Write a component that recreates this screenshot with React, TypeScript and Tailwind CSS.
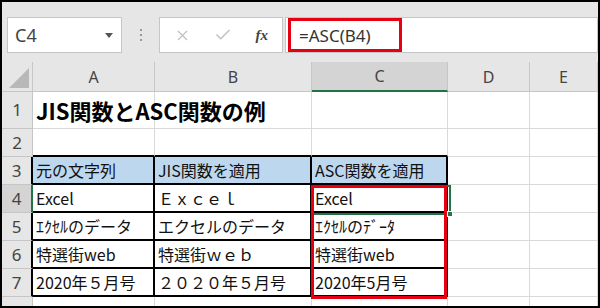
import React from 'react';
import { X, Check } from 'lucide-react';

type Row = {
  label: string;
  h: string;
  cells: string[];
};

const rows: Row[] = [
  { label: '1', h: 'h-[37px]', cells: ['', '', '', '', ''] },
  { label: '2', h: 'h-[28px]', cells: ['', '', '', '', ''] },
  { label: '3', h: 'h-[28px]', cells: ['元の文字列', 'JIS関数を適用', 'ASC関数を適用', '', ''] },
  { label: '4', h: 'h-[28px]', cells: ['Excel', 'Ｅｘｃｅｌ', 'Excel', '', ''] },
  { label: '5', h: 'h-[28px]', cells: ['ｴｸｾﾙのデータ', 'エクセルのデータ', 'ｴｸｾﾙのﾃﾞｰﾀ', '', ''] },
  { label: '6', h: 'h-[28px]', cells: ['特選街web', '特選街ｗｅｂ', '特選街web', '', ''] },
  { label: '7', h: 'h-[28px]', cells: ['2020年５月号', '２０２０年５月号', '2020年5月号', '', ''] },
];

const colLetters = ['A', 'B', 'C', 'D', 'E'];

const rowHeadClass = (label: string) => {
  if (label === '4') return 'bg-[#d4d4d4] border-r-2 border-r-[#217346] border-b border-b-[#c6c6c6]';
  if (label === '3' || label === '5' || label === '6' || label === '7')
    return 'bg-[#e6e6e6] border-r-2 border-r-black border-b border-b-[#c6c6c6]';
  return 'bg-[#e6e6e6] border-r border-r-[#c6c6c6] border-b border-b-[#c6c6c6]';
};

const cellClass = (label: string, col: number) => {
  const inTable = col < 3 && ['3', '4', '5', '6', '7'].includes(label);
  if (inTable) {
    const bg = label === '3' ? 'bg-[#bdd7ee]' : 'bg-white';
    return `${bg} border-r-2 border-b-2 border-black`;
  }
  if (label === '2' && col < 3) return 'bg-white border-r border-r-[#d9d9d9] border-b-2 border-b-black';
  return 'bg-white border-r border-b border-[#d9d9d9]';
};

export default function App() {
  return (
    <div className="w-[600px] h-[308px] border-2 border-black bg-[#e6e6e6] flex flex-col overflow-hidden" style={{ fontFamily: '"Noto Sans CJK JP", "Noto Sans", sans-serif' }}>
      <div className="h-[15px]" />
      {/* formula bar */}
      <div className="h-[36px] flex">
        <div className="ml-[5px] w-[115px] bg-white border border-[#c6c6c6] flex items-center justify-between pl-[7px] pr-[8px]">
          <span className="text-[18px] text-[#444] font-['Noto_Sans'] leading-none">C4</span>
          <span className="w-0 h-0 border-l-[4px] border-r-[4px] border-t-[5px] border-l-transparent border-r-transparent border-t-[#555]" />
        </div>
        <div className="w-[37px] flex flex-col items-center justify-center gap-[3px]">
          <span className="w-[2px] h-[2px] bg-[#999]" />
          <span className="w-[2px] h-[2px] bg-[#999]" />
          <span className="w-[2px] h-[2px] bg-[#999]" />
        </div>
        <div className="w-[124px] bg-white border border-[#c6c6c6] flex items-center justify-between pl-[14px] pr-[14px]">
          <X size={17} strokeWidth={1.5} color="#bdbdbd" />
          <Check size={18} strokeWidth={2.2} color="#c4c4c4" />
          <span className="text-[15px] italic font-bold text-[#444] font-['Liberation_Serif'] leading-none">fx</span>
        </div>
        <div className="ml-[2px] flex-1 bg-white border border-[#c6c6c6] flex pl-[2px]">
          <div className="w-[114px] border-[3px] border-[#e60012] flex items-center pl-[8px]">
            <span className="text-[17px] text-[#333] font-['Noto_Sans'] leading-none">=ASC(B4)</span>
          </div>
        </div>
      </div>
      <div className="h-[9px]" />
      {/* sheet */}
      <div className="relative flex-1">
        <div className="grid grid-cols-[31px_122px_157px_136px_82px_68px]">
          <div className="h-[30px] bg-[#e6e6e6] border-r border-b border-[#c6c6c6] flex items-end justify-end pr-[3px] pb-[3px]">
            <svg width="20" height="20" viewBox="0 0 20 20">
              <polygon points="20,0 20,20 0,20" fill="#b8b8b8" />
            </svg>
          </div>
          {colLetters.map((l, i) => (
            <div
              key={l}
              className={
                i === 2
                  ? 'h-[30px] bg-[#d4d4d4] border-r border-r-[#c6c6c6] border-b-2 border-b-[#217346] flex items-center justify-center text-[16px] text-[#444] font-["Noto_Sans"]'
                  : 'h-[30px] bg-[#e6e6e6] border-r border-b border-[#c6c6c6] flex items-center justify-center text-[16px] text-[#444] font-["Noto_Sans"]'
              }
            >
              {l}
            </div>
          ))}
          {rows.map((r) => (
            <React.Fragment key={r.label}>
              <div className={`${r.h} ${rowHeadClass(r.label)} flex items-center justify-center text-[17px] text-[#444] font-["Noto_Sans"]`}>
                {r.label}
              </div>
              {r.cells.map((c, i) => (
                <div key={i} className={`${r.h} ${cellClass(r.label, i)} flex items-center pl-[3px] text-[16px] text-[#111] whitespace-nowrap overflow-visible`}>
                  {r.label === '1' && i === 0 ? (
                    <span className="text-[22px] font-bold text-black relative z-10">JIS関数とASC関数の例</span>
                  ) : (
                    c
                  )}
                </div>
              ))}
            </React.Fragment>
          ))}
          <div className="h-[9px] bg-[#e6e6e6] border-r border-[#c6c6c6]" />
          {colLetters.map((l) => (
            <div key={l} className="h-[9px] bg-white border-r border-[#d9d9d9]" />
          ))}
        </div>
        {/* active cell */}
        <div className="absolute left-[309px] top-[123px] w-[140px] h-[30px] border-2 border-[#217346]" />
        <div className="absolute left-[445px] top-[149px] w-[6px] h-[6px] bg-[#217346] border border-white" />
        {/* highlight */}
        <div className="absolute left-[309px] top-[123px] w-[136px] h-[114px] border-[3px] border-[#e60012]" />
      </div>
    </div>
  );
}
